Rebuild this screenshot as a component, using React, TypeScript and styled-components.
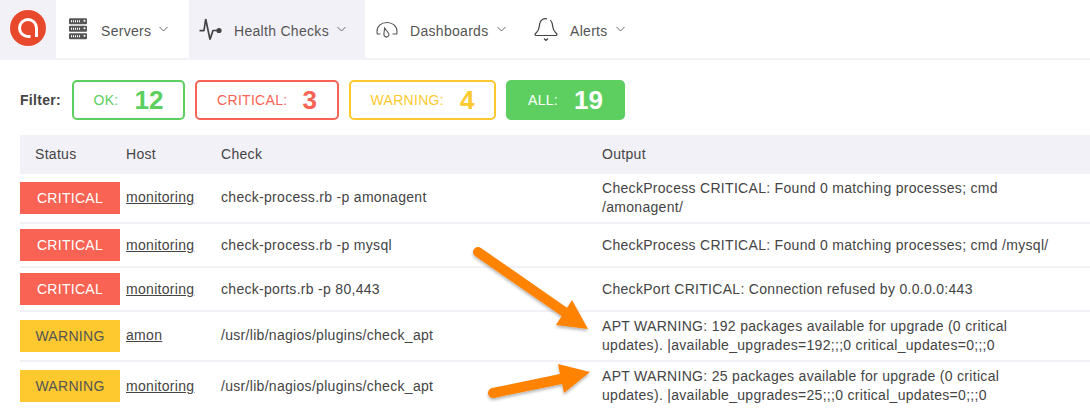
import React from "react";
import styled, { createGlobalStyle } from "styled-components";

const Global = createGlobalStyle`
  html, body { margin: 0; padding: 0; background: #fff; overflow: hidden; }
  body { font-family: "Liberation Sans", Arial, sans-serif; font-size: 14px; color: #444; letter-spacing: 0.3px; }
`;
const Page = styled.div`position: relative; width: 1090px; height: 410px; overflow: hidden;`;
const Nav = styled.nav`display: flex; height: 58px; border-bottom: 2px solid #f3f1f8;`;
const LogoCell = styled.div`width: 56px; background: #f3f1f8; padding: 10px 0 0 10px; box-sizing: border-box;`;
const NavItem = styled.div<{ $w: number; $active?: boolean; $gap: number; $pad: number }>`
  width: ${p => p.$w}px; box-sizing: border-box; padding-left: ${p => p.$pad}px; display: flex; align-items: center;
  gap: ${p => p.$gap}px; background: ${p => (p.$active ? "#f3f1f8" : "#fff")}; color: #555;
`;
const IconBox = styled.span`width: 24px; height: 24px; display: flex; flex: none;`;
const NavLabel = styled.span`padding-top: 4px; white-space: nowrap;`;
const Caret = styled.svg`width: 9px; height: 6px; margin-left: 8px; vertical-align: 4px;`;
const FilterBar = styled.div`display: flex; align-items: center; height: 40px; margin-top: 20px; padding-left: 20px;`;
const FilterLabel = styled.b`font-size: 14px; color: #444; width: 52px;`;
const Pill = styled.div<{ $c: string; $w: number; $fill?: boolean; $gap: number }>`
  width: ${p => p.$w}px; height: 40px; box-sizing: border-box; border: 2px solid ${p => p.$c}; border-radius: 5px;
  margin-right: 10px; display: flex; align-items: center; justify-content: center; gap: ${p => p.$gap}px;
  color: ${p => (p.$fill ? "#fff" : p.$c)}; background: ${p => (p.$fill ? p.$c : "transparent")};
`;
const PillNum = styled.b`font-size: 26px; line-height: 1; letter-spacing: 0;`;
const Table = styled.div`margin: 15px 0 0 20px;`;
const Cols = "100px 95px 381px 1fr";
const Head = styled.div`display: grid; grid-template-columns: ${Cols}; height: 39px; box-sizing: border-box; padding-bottom: 2px; align-items: center; background: #f3f1f8;`;
const HeadCell = styled.div<{ $first?: boolean }>`padding-left: ${p => (p.$first ? 15 : 6)}px;`;
const Row = styled.div<{ $h: number; $last?: boolean }>`
  display: grid; grid-template-columns: ${Cols}; height: ${p => p.$h}px; align-items: center;
  box-sizing: border-box; border-bottom: ${p => (p.$last ? "none" : "2px solid #f3f1f8")};
`;
const Badge = styled.div<{ $k: "c" | "w" }>`
  height: 32px; display: flex; align-items: center; justify-content: center;
  background: ${p => (p.$k === "c" ? "#f96353" : "#fdc92f")}; color: ${p => (p.$k === "c" ? "#fff" : "#555")};
`;
const HostCell = styled.div<{ $lift: boolean }>`margin-top: ${p => (p.$lift ? -2 : 0)}px;`;
const HostLink = styled.a`padding-left: 6px; color: #444; text-decoration: underline;`;
const Cell = styled.div<{ $lift?: boolean }>`padding-left: 6px; line-height: 19px; margin-top: ${p => (p.$lift ? -2 : 0)}px;`;
const OutLine = styled.div`white-space: nowrap;`;
const Overlay = styled.svg`position: absolute; left: 0; top: 0; pointer-events: none;`;

const CaretIcon = () => (
  <Caret viewBox="0 0 9 6"><path d="M.5 1l4 4 4-4" fill="none" stroke="#666" strokeWidth="1" /></Caret>
);
const rows = [
  { k: "c", s: "CRITICAL", h: "monitoring", c: "check-process.rb -p amonagent", o: ["CheckProcess CRITICAL: Found 0 matching processes; cmd", "/amonagent/"], H: 50 },
  { k: "c", s: "CRITICAL", h: "monitoring", c: "check-process.rb -p mysql", o: ["CheckProcess CRITICAL: Found 0 matching processes; cmd /mysql/"], H: 44 },
  { k: "c", s: "CRITICAL", h: "monitoring", c: "check-ports.rb -p 80,443", o: ["CheckPort CRITICAL: Connection refused by 0.0.0.0:443"], H: 44 },
  { k: "w", s: "WARNING", h: "amon", c: "/usr/lib/nagios/plugins/check_apt", o: ["APT WARNING: 192 packages available for upgrade (0 critical", "updates). |available_upgrades=192;;;0 critical_updates=0;;;0"], H: 50 },
  { k: "w", s: "WARNING", h: "monitoring", c: "/usr/lib/nagios/plugins/check_apt", o: ["APT WARNING: 25 packages available for upgrade (0 critical", "updates). |available_upgrades=25;;;0 critical_updates=0;;;0"], H: 48, last: true },
] as const;

export default function App() {
  return (
    <Page>
      <Global />
      <Nav>
        <LogoCell>
          <svg width="36" height="36" viewBox="0 0 36 36">
            <circle cx="18" cy="18" r="18" fill="#e8492d" />
            <path d="M26.5 27V18a8.5 8.5 0 1 0-8.5 8.5h2.5" fill="none" stroke="#fff" strokeWidth="3" />
          </svg>
        </LogoCell>
        <NavItem $w={133} $gap={9} $pad={12}>
          <IconBox>
            <svg width="24" height="24" viewBox="0 0 24 24">
              {[1.3, 8.8, 16.3].map(y => (
                <g key={y}>
                  <rect x="1" y={y} width="18" height="6" rx="1" fill="#555" />
                  <path d={`M3 ${y + 2}h1v2H3zM5 ${y + 2}h1v2H5zM7 ${y + 2}h1v2H7zM9 ${y + 2}h1v2H9zM11 ${y + 2}h1v2h-1z`} fill="#fff" />
                  <circle cx="16.5" cy={y + 2.5} r="1" fill="#fff" />
                </g>
              ))}
            </svg>
          </IconBox>
          <NavLabel>Servers<CaretIcon /></NavLabel>
        </NavItem>
        <NavItem $w={176} $gap={11} $pad={10} $active>
          <IconBox>
            <svg width="24" height="24" viewBox="0 0 24 24">
              <path d="M.5 13.7H5L6.7 2 11 22.5 14 13.5h5" fill="none" stroke="#444" strokeWidth="1.7" strokeLinejoin="bevel" />
              <circle cx="20" cy="13.5" r="2.6" fill="#444" />
            </svg>
          </IconBox>
          <NavLabel>Health Checks<CaretIcon /></NavLabel>
        </NavItem>
        <NavItem $w={156} $gap={10} $pad={11}>
          <IconBox>
            <svg width="24" height="24" viewBox="0 0 24 24">
              <path d="M4.5 17H1.3C1 16 1 15.2 1 14.5 1 9 5.5 5.5 11 5.5S21 9 21 14.5c0 1 0 1.6-.3 2.5H16.5" fill="none" stroke="#555" strokeWidth="1.1" />
              <path d="M8.7 11l4 5.5a2.4 2.4 0 0 1-3.6 3 3 3 0 0 1-1.2-3z" fill="none" stroke="#555" strokeWidth="1.1" />
            </svg>
          </IconBox>
          <NavLabel>Dashboards<CaretIcon /></NavLabel>
        </NavItem>
        <NavItem $w={110} $gap={12} $pad={13}>
          <IconBox>
            <svg width="24" height="24" viewBox="0 0 24 24">
              <path d="M13 1.8C9.5.8 6.5 3 5.8 6.5 5 10 5.5 13 2.5 15.5 1.5 16.3 1 17 1 17.5c0 .7.5 1 1.2 1h19.6c.7 0 1.2-.3 1.2-1 0-.5-.5-1.2-1.5-2-3-2.5-2.5-5.5-3.3-9-.3-1.5-1-2.6-2-3.4" fill="none" stroke="#444" strokeWidth="1.2" />
              <path d="M10 21.5l2 2 2-2" fill="none" stroke="#444" strokeWidth="1.2" />
            </svg>
          </IconBox>
          <NavLabel>Alerts<CaretIcon /></NavLabel>
        </NavItem>
      </Nav>
      <FilterBar>
        <FilterLabel>Filter:</FilterLabel>
        <Pill $c="#5dcf60" $w={113} $gap={16}><span>OK:</span><PillNum>12</PillNum></Pill>
        <Pill $c="#f96353" $w={144} $gap={15}><span>CRITICAL:</span><PillNum>3</PillNum></Pill>
        <Pill $c="#fdc92f" $w={147} $gap={16}><span>WARNING:</span><PillNum>4</PillNum></Pill>
        <Pill $c="#5dcf60" $w={119} $gap={16} $fill><span>ALL:</span><PillNum>19</PillNum></Pill>
      </FilterBar>
      <Table>
        <Head>
          <HeadCell $first>Status</HeadCell><HeadCell>Host</HeadCell><HeadCell>Check</HeadCell><HeadCell>Output</HeadCell>
        </Head>
        {rows.map((r, i) => (
          <Row key={i} $h={r.H} $last={"last" in r}>
            <Badge $k={r.k}>{r.s}</Badge>
            <HostCell $lift={r.H === 50}><HostLink href="#">{r.h}</HostLink></HostCell>
            <Cell $lift={r.H === 50}>{r.c}</Cell>
            <Cell>{r.o.map(l => <OutLine key={l}>{l}</OutLine>)}</Cell>
          </Row>
        ))}
      </Table>
      <Overlay width="1090" height="410" viewBox="0 0 1090 410">
        <defs>
          <filter id="sh" x="-20%" y="-20%" width="140%" height="140%">
            <feDropShadow dx="0" dy="2" stdDeviation="1.5" floodColor="#000" floodOpacity="0.3" />
          </filter>
        </defs>
        <g filter="url(#sh)" fill="#ff8300">
          <path d="M478 252L564.5 312" stroke="#ff8300" strokeWidth="10" strokeLinecap="round" />
          <path d="M588 329L572 300L556 325Z" />
          <path d="M493 393L561 379" stroke="#ff8300" strokeWidth="10" strokeLinecap="round" />
          <path d="M590 372L558 364L564 393Z" />
        </g>
      </Overlay>
    </Page>
  );
}
